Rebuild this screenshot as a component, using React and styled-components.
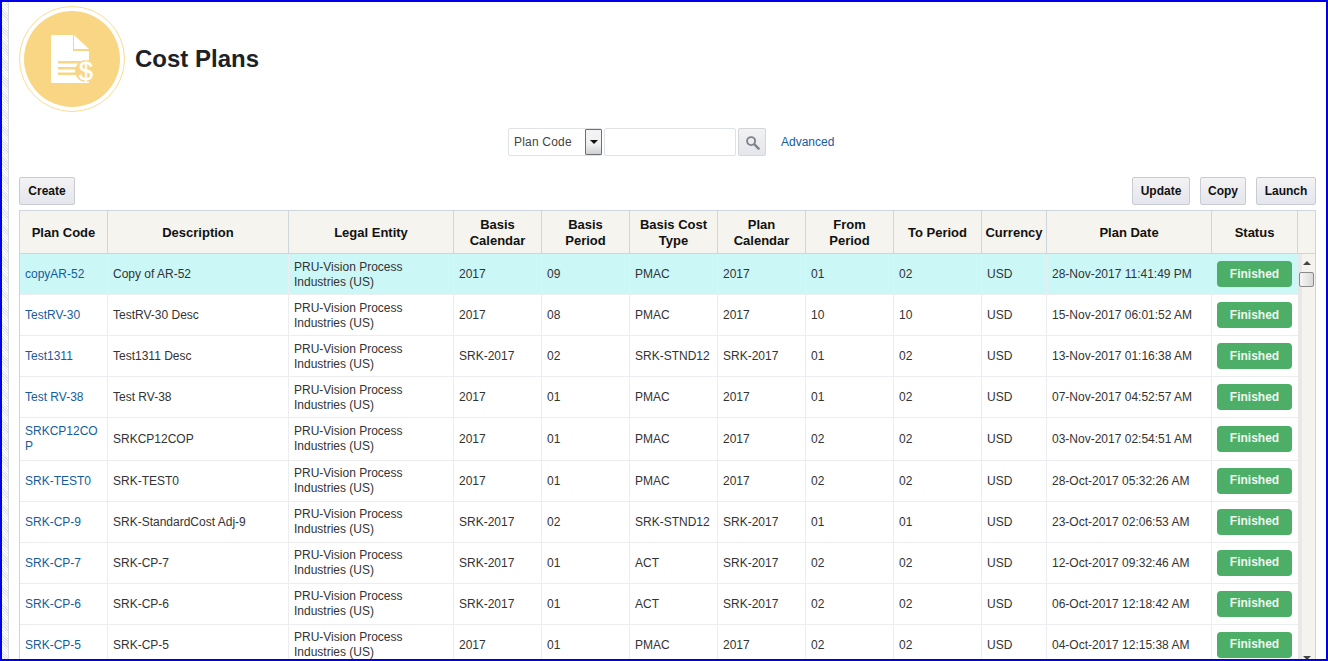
import React from 'react';
import styled, { createGlobalStyle } from 'styled-components';

const COLS = '88px 181px 165px 88px 88px 88px 88px 88px 88px 65px 165px 86px';
const ENTITY = 'PRU-Vision Process Industries (US)';

const HEADERS = [
  'Plan Code', 'Description', 'Legal Entity', 'Basis\nCalendar', 'Basis\nPeriod', 'Basis Cost\nType',
  'Plan\nCalendar', 'From\nPeriod', 'To Period', 'Currency', 'Plan Date', 'Status',
];

const PLANS = [
  ['copyAR-52', 'Copy of AR-52', '2017', '09', 'PMAC', '2017', '01', '02', '28-Nov-2017 11:41:49 PM'],
  ['TestRV-30', 'TestRV-30 Desc', '2017', '08', 'PMAC', '2017', '10', '10', '15-Nov-2017 06:01:52 AM'],
  ['Test1311', 'Test1311 Desc', 'SRK-2017', '02', 'SRK-STND12', 'SRK-2017', '01', '02', '13-Nov-2017 01:16:38 AM'],
  ['Test RV-38', 'Test RV-38', '2017', '01', 'PMAC', '2017', '01', '02', '07-Nov-2017 04:52:57 AM'],
  ['SRKCP12COP', 'SRKCP12COP', '2017', '01', 'PMAC', '2017', '02', '02', '03-Nov-2017 02:54:51 AM'],
  ['SRK-TEST0', 'SRK-TEST0', '2017', '01', 'PMAC', '2017', '02', '02', '28-Oct-2017 05:32:26 AM'],
  ['SRK-CP-9', 'SRK-StandardCost Adj-9', 'SRK-2017', '02', 'SRK-STND12', 'SRK-2017', '01', '01', '23-Oct-2017 02:06:53 AM'],
  ['SRK-CP-7', 'SRK-CP-7', 'SRK-2017', '01', 'ACT', 'SRK-2017', '02', '02', '12-Oct-2017 09:32:46 AM'],
  ['SRK-CP-6', 'SRK-CP-6', 'SRK-2017', '01', 'ACT', 'SRK-2017', '02', '02', '06-Oct-2017 12:18:42 AM'],
  ['SRK-CP-5', 'SRK-CP-5', '2017', '01', 'PMAC', '2017', '02', '02', '04-Oct-2017 12:15:38 AM'],
];

function PlanIcon() {
  return (
    <svg width="96" height="96" viewBox="0 0 96 96">
      <path d="M27 25a1 1 0 0 1 1-1h21v16h16v32H28a1 1 0 0 1-1-1z" fill="#fff" />
      <path d="M50 24l15 14H50z" fill="#fff" />
      <path d="M34 50h24v2.500H34zM34 56h24v2.500H34zM34 61.500h24V64H34z" fill="#f9d684" />
      <circle cx="62" cy="60" r="11" fill="#f9d684" />
      <text x="62" y="69" fontFamily="Liberation Sans" fontSize="25" fill="#fff" stroke="#fff" strokeWidth="0.5" textAnchor="middle">$</text>
    </svg>
  );
}

function App() {
  return (
    <>
      <GlobalStyle />
      <Frame>
        <Rail />
        <Main>
          <PageHead>
            <Badge><PlanIcon /></Badge>
            <Title>Cost Plans</Title>
          </PageHead>

          <SearchRow>
            <SelectBox>
              <span>Plan Code</span>
              <SelectArrow />
            </SelectBox>
            <SearchInput />
            <SearchButton>
              <svg width="15" height="15" viewBox="0 0 16 16">
                <circle cx="6.500" cy="6.500" r="4.300" fill="none" stroke="#7d8388" strokeWidth="2" />
                <path d="M10 10l4.500 4.500" stroke="#7d8388" strokeWidth="2.600" strokeLinecap="round" />
              </svg>
            </SearchButton>
            <AdvancedLink>Advanced</AdvancedLink>
          </SearchRow>

          <Toolbar>
            <ActionButton $width={56}>Create</ActionButton>
            <ToolbarRight>
              <ActionButton $width={58}>Update</ActionButton>
              <ActionButton $width={46}>Copy</ActionButton>
              <ActionButton $width={60}>Launch</ActionButton>
            </ToolbarRight>
          </Toolbar>

          <Table>
            <HeadRow>
              <HeadCells>
                {HEADERS.map((h) => <HeadCell key={h}>{h}</HeadCell>)}
              </HeadCells>
            </HeadRow>
            <TableBody>
              <Rows>
                {PLANS.map((p, i) => (
                  <Row key={p[0]} $selected={i === 0} $tall={p[0] === 'SRKCP12COP'}>
                    <Cell><CodeLink>{p[0]}</CodeLink></Cell>
                    <Cell>{p[1]}</Cell>
                    <EntityCell $low={i < 4}>{ENTITY}</EntityCell>
                    {p.slice(2, 8).map((v, j) => <Cell key={j}>{v}</Cell>)}
                    <Cell>USD</Cell>
                    <Cell>{p[8]}</Cell>
                    <StatusCell><StatusButton $low={i < 4}>Finished</StatusButton></StatusCell>
                  </Row>
                ))}
              </Rows>
              <ScrollTrack>
                <ScrollArrow />
                <ScrollThumb />
                <ScrollArrow $down />
              </ScrollTrack>
            </TableBody>
          </Table>
        </Main>
      </Frame>
    </>
  );
}

export default App;

const GlobalStyle = createGlobalStyle`
  html, body {
    margin: 0;
    padding: 0;
    background: #fff;
    overflow: hidden;
  }
  * {
    box-sizing: border-box;
  }
`;

const Frame = styled.div`
  display: flex;
  width: 1328px;
  height: 661px;
  border: 2px solid #0000e6;
  overflow: hidden;
  font-family: "Liberation Sans", Arial, sans-serif;
  font-size: 12px;
  color: #333;
`;

const Rail = styled.div`
  flex: 0 0 7px;
  border-right: 1px solid #d5d9e0;
  background: repeating-linear-gradient(45deg, #e0e5eb 0 1px, #fff 1px 2px);
`;

const Main = styled.div`
  flex: 1;
  min-width: 0;
  padding: 4px 10px 0 10px;
  display: flex;
  flex-direction: column;
`;

const PageHead = styled.div`
  display: flex;
  align-items: center;
  gap: 10px;
  height: 106px;
`;

const Badge = styled.div`
  width: 106px;
  height: 106px;
  border-radius: 50%;
  border: 1px solid #fbdc96;
  display: flex;
  align-items: center;
  justify-content: center;
  svg {
    background: #f9d684;
    border-radius: 50%;
  }
`;

const Title = styled.h1`
  margin: 0;
  font-size: 24px;
  font-weight: 700;
  color: #1c2226;
`;

const SearchRow = styled.div`
  display: flex;
  align-items: center;
  margin-top: 16px;
  height: 28px;
  padding-left: 489px;
`;

const SelectBox = styled.div`
  width: 94px;
  height: 28px;
  border: 1px solid #dfe2e6;
  border-radius: 2px;
  padding: 0 0 0 5px;
  display: flex;
  align-items: center;
  justify-content: space-between;
  font-size: 12px;
  letter-spacing: 0.2px;
  color: #444;
`;

const SelectArrow = styled.div`
  width: 17px;
  height: 26px;
  margin-right: -1px;
  border: 1px solid #6d7175;
  border-radius: 1px;
  background: linear-gradient(#f4f4f4, #f0f0f0 60%, #cfd0d0);
  display: flex;
  align-items: center;
  justify-content: center;
  &::after {
    content: '';
    border-left: 4px solid transparent;
    border-right: 4px solid transparent;
    border-top: 4px solid #111;
  }
`;

const SearchInput = styled.div`
  width: 132px;
  height: 28px;
  margin-left: 2px;
  border: 1px solid #dfe2e6;
  border-radius: 2px;
  background: #fff;
`;

const SearchButton = styled.div`
  width: 28px;
  height: 28px;
  margin-left: 2px;
  border: 1px solid #d3d6da;
  border-radius: 2px;
  background: linear-gradient(#f2f2f3, #e4e6ed);
  display: flex;
  align-items: center;
  justify-content: center;
`;

const AdvancedLink = styled.a`
  margin-left: 15px;
  color: #145c9e;
  font-size: 12px;
`;

const Toolbar = styled.div`
  display: flex;
  justify-content: space-between;
  margin-top: 21px;
`;

const ToolbarRight = styled.div`
  display: flex;
  gap: 10px;
`;

const ActionButton = styled.div`
  width: ${({ $width }) => $width}px;
  height: 28px;
  border: 1px solid #c8ccd2;
  border-radius: 2px;
  background: linear-gradient(#f3f3f4, #e4e6ed);
  display: flex;
  align-items: center;
  justify-content: center;
  font-size: 12px;
  font-weight: 700;
  color: #111;
`;

const Table = styled.div`
  margin-top: 5px;
  border: 1px solid #cdd5dd;
  border-bottom: 0;
  width: 1297px;
`;

const HeadRow = styled.div`
  display: flex;
  height: 43px;
  background: #f5f4ee;
  border-bottom: 1px solid #cdd5dd;
`;

const HeadCells = styled.div`
  display: grid;
  grid-template-columns: ${COLS};
`;

const HeadCell = styled.div`
  display: flex;
  align-items: center;
  justify-content: center;
  text-align: center;
  white-space: pre-line;
  padding: 1px 3px 0;
  border-right: 1px solid #cdd5dd;
  font-size: 13px;
  line-height: 16px;
  font-weight: 700;
  color: #111;
`;

const TableBody = styled.div`
  display: flex;
`;

const Rows = styled.div`
  display: flex;
  flex-direction: column;
`;

const Row = styled.div`
  display: grid;
  grid-template-columns: ${COLS};
  height: ${({ $tall }) => ($tall ? '43px' : '41px')};
  flex: none;
  background: ${({ $selected }) => ($selected ? '#ccf7f7' : '#fff')};
  border-bottom: 1px solid #ebedf0;
`;

const Cell = styled.div`
  display: flex;
  align-items: center;
  padding: 0 5px;
  border-right: 1px solid #ebedf0;
  line-height: 15px;
  overflow-wrap: anywhere;
  color: #333;
`;

const EntityCell = styled(Cell)`
  padding-top: ${({ $low }) => ($low ? '2px' : '0')};
`;

const CodeLink = styled.a`
  color: #145c9e;
`;

const StatusCell = styled(Cell)`
  padding: 0 0 0 5px;
  border-right: 0;
`;

const StatusButton = styled.div`
  width: 75px;
  height: 26px;
  padding-bottom: ${({ $low }) => ($low ? '0' : '2px')};
  border-radius: 4px;
  background: #4cae67;
  color: #eef8f0;
  font-weight: 700;
  font-size: 12px;
  display: flex;
  align-items: center;
  justify-content: center;
`;

const ScrollTrack = styled.div`
  flex: 1;
  height: 406px;
  display: flex;
  flex-direction: column;
  align-items: center;
  background: linear-gradient(90deg, #e8e8e8 0 4px, #f4f3ee 4px);
  padding-top: 7px;
`;

const ScrollArrow = styled.div`
  flex: none;
  border-left: 4px solid transparent;
  border-right: 4px solid transparent;
  ${({ $down }) => ($down
    ? 'border-top: 4px solid #444; margin-top: auto;'
    : 'border-bottom: 4px solid #444;')}
`;

const ScrollThumb = styled.div`
  width: 15px;
  height: 15px;
  margin-top: 7px;
  border: 1px solid #8a8a8a;
  border-radius: 2px;
  background: linear-gradient(90deg, #f6f6f6, #d9d9d9);
`;
